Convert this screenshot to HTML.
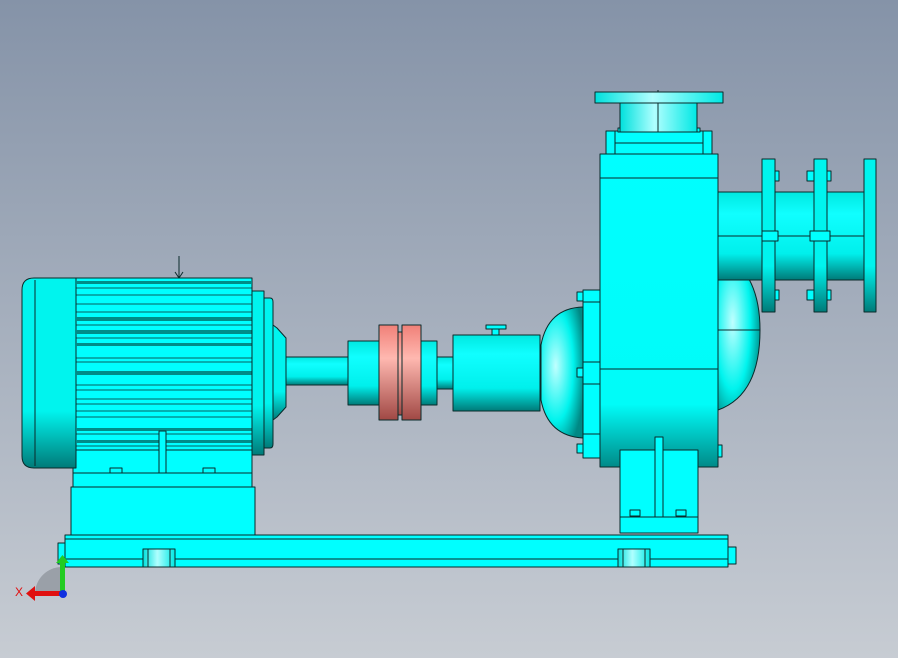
<!DOCTYPE html><html><head><style>html,body{margin:0;padding:0}body{width:898px;height:658px;overflow:hidden}</style></head><body>
<svg width="898" height="658" viewBox="0 0 898 658" xmlns="http://www.w3.org/2000/svg" style="display:block">
<defs>
<linearGradient id="bg" x1="0" y1="0" x2="0" y2="1"><stop offset="0" stop-color="#8593a8"/><stop offset="1" stop-color="#c7ccd3"/></linearGradient>
<linearGradient id="cyl" x1="0" y1="0" x2="0" y2="1"><stop offset="0" stop-color="#00e8e0"/><stop offset="0.25" stop-color="#10ffff"/><stop offset="0.7" stop-color="#00f0ec"/><stop offset="1" stop-color="#007a78"/></linearGradient>
<linearGradient id="cylh" x1="0" y1="0" x2="1" y2="0"><stop offset="0" stop-color="#00e0dc"/><stop offset="0.45" stop-color="#b0ffff"/><stop offset="1" stop-color="#00e8e4"/></linearGradient>
<linearGradient id="red" x1="0" y1="0" x2="0" y2="1"><stop offset="0" stop-color="#f08078"/><stop offset="0.35" stop-color="#ffb8b0"/><stop offset="1" stop-color="#a04844"/></linearGradient>
<linearGradient id="cap" x1="0" y1="0" x2="0" y2="1"><stop offset="0" stop-color="#00f4ee"/><stop offset="0.7" stop-color="#00f4ee"/><stop offset="1" stop-color="#007a78"/></linearGradient>
<linearGradient id="body" x1="0" y1="0" x2="0" y2="1"><stop offset="0" stop-color="#00ffff"/><stop offset="0.8" stop-color="#00fcf8"/><stop offset="1" stop-color="#008a88"/></linearGradient>
<radialGradient id="dome" cx="0.35" cy="0.45" r="0.7"><stop offset="0" stop-color="#c0ffff"/><stop offset="0.6" stop-color="#00f4ee"/><stop offset="1" stop-color="#008884"/></radialGradient>
</defs>
<rect width="898" height="658" fill="url(#bg)"/>
<g stroke-width="1" stroke-linejoin="round" style="stroke:#0a2a2a">
<rect x="65" y="535" width="663" height="32" fill="#00ffff"/>
<line x1="65" y1="539" x2="728" y2="539"/><line x1="65" y1="559" x2="728" y2="559"/>
<rect x="728" y="547" width="8" height="17" fill="#00ffff"/>
<rect x="58" y="543" width="7" height="21" fill="#00ffff"/>
<rect x="143" y="549" width="32" height="18" fill="url(#cylh)"/><line x1="148" y1="549" x2="148" y2="567"/><line x1="170" y1="549" x2="170" y2="567"/>
<rect x="618" y="549" width="32" height="18" fill="url(#cylh)"/><line x1="623" y1="549" x2="623" y2="567"/><line x1="645" y1="549" x2="645" y2="567"/>
<rect x="71" y="487" width="184" height="48" fill="#00ffff"/>
<rect x="73" y="450" width="179" height="37" fill="#00ffff"/>
<line x1="73" y1="473" x2="252" y2="473"/>
<rect x="110" y="468" width="12" height="5" fill="#00ffff"/><rect x="203" y="468" width="12" height="5" fill="#00ffff"/>
<path d="M34 278 H76 V468 H34 Q22 468 22 456 V290 Q22 278 34 278Z" fill="url(#cap)"/>
<line x1="35" y1="280" x2="35" y2="466"/>
<rect x="76" y="278" width="176" height="172" fill="#00ffff"/>
<g fill="#008c88" stroke="none">
<rect x="76" y="281" width="176" height="3"/><rect x="76" y="317" width="176" height="4"/><rect x="76" y="330" width="176" height="4"/><rect x="76" y="343" width="176" height="3"/><rect x="76" y="371" width="176" height="4"/><rect x="76" y="428" width="176" height="3"/><rect x="76" y="440" width="176" height="3"/>
</g>
<g stroke-width="0.8">
<line x1="76" y1="288" x2="252" y2="288"/><line x1="76" y1="295" x2="252" y2="295"/><line x1="76" y1="304" x2="252" y2="304"/><line x1="76" y1="312" x2="252" y2="312"/><line x1="76" y1="325" x2="252" y2="325"/><line x1="76" y1="338" x2="252" y2="338"/><line x1="76" y1="358" x2="252" y2="358"/><line x1="76" y1="362" x2="252" y2="362"/><line x1="76" y1="385" x2="252" y2="385"/><line x1="76" y1="390" x2="252" y2="390"/><line x1="76" y1="399" x2="252" y2="399"/><line x1="76" y1="404" x2="252" y2="404"/><line x1="76" y1="411" x2="252" y2="411"/><line x1="76" y1="417" x2="252" y2="417"/><line x1="76" y1="434" x2="252" y2="434"/><line x1="76" y1="446" x2="252" y2="446"/>
</g>
<rect x="159" y="431" width="7" height="42" fill="#00ffff"/>
<line x1="179" y1="256" x2="179" y2="278"/><path d="M175 272 L179 278 L183 272" fill="none"/>
<rect x="252" y="291" width="12" height="164" fill="url(#cap)"/>
<path d="M264 298 H270 Q273 298 273 302 V444 Q273 448 270 448 H264Z" fill="url(#cap)"/>
<path d="M273 325 L277 328 L286 338 V407 L277 417 L273 420Z" fill="url(#cap)"/>
<rect x="286" y="357" width="62" height="28" fill="url(#cyl)"/>
<rect x="348" y="341" width="89" height="64" fill="url(#cyl)"/>
<rect x="379" y="325" width="19" height="95" fill="url(#red)"/>
<rect x="398" y="332" width="4" height="83" fill="url(#red)"/>
<rect x="402" y="325" width="19" height="95" fill="url(#red)"/>
<rect x="437" y="357" width="16" height="32" fill="url(#cyl)"/>
<rect x="453" y="335" width="87" height="76" fill="url(#cyl)"/>
<rect x="486" y="325" width="20" height="4" fill="#00ffff"/><rect x="492" y="329" width="7" height="6" fill="#00ffff"/>
<path d="M583 307 Q548 308 541 345 V400 Q548 436 583 438Z" fill="url(#dome)"/>
<rect x="583" y="290" width="17" height="168" fill="#00ffff"/>
<line x1="583" y1="302" x2="600" y2="302"/><line x1="583" y1="362" x2="600" y2="362"/><line x1="583" y1="384" x2="600" y2="384"/><line x1="583" y1="434" x2="600" y2="434"/>
<rect x="577" y="292" width="6" height="9" fill="#00ffff"/><rect x="577" y="368" width="6" height="9" fill="#00ffff"/><rect x="577" y="444" width="6" height="9" fill="#00ffff"/>
<path d="M718 250 Q760 270 760 330 Q760 395 718 410Z" fill="url(#dome)"/>
<line x1="718" y1="280" x2="760" y2="280"/><line x1="718" y1="330" x2="760" y2="330"/>
<rect x="718" y="192" width="150" height="88" fill="url(#cyl)"/>
<line x1="718" y1="236" x2="866" y2="236"/>
<rect x="762" y="159" width="13" height="153" fill="url(#cap)"/>
<rect x="814" y="159" width="13" height="153" fill="url(#cap)"/>
<rect x="864" y="159" width="12" height="153" fill="url(#cap)"/>
<rect x="762" y="231" width="16" height="10" fill="#00ffff"/><rect x="810" y="231" width="20" height="10" fill="#00ffff"/>
<rect x="775" y="171" width="4" height="10" fill="#00ffff"/><rect x="775" y="290" width="4" height="10" fill="#00ffff"/>
<rect x="807" y="171" width="7" height="10" fill="#00ffff"/><rect x="827" y="171" width="4" height="10" fill="#00ffff"/>
<rect x="807" y="290" width="7" height="10" fill="#00ffff"/><rect x="827" y="290" width="4" height="10" fill="#00ffff"/>
<rect x="600" y="154" width="118" height="313" fill="url(#body)"/>
<line x1="600" y1="178" x2="718" y2="178"/><line x1="600" y1="369" x2="718" y2="369"/>
<rect x="718" y="445" width="4" height="12" fill="#00ffff"/>
<rect x="606" y="131" width="106" height="23" fill="#00ffff"/>
<line x1="615" y1="131" x2="615" y2="154"/><line x1="703" y1="131" x2="703" y2="154"/><line x1="615" y1="143" x2="703" y2="143"/>
<rect x="618" y="128" width="8" height="4" fill="#00ffff"/><rect x="692" y="128" width="8" height="4" fill="#00ffff"/>
<rect x="620" y="102" width="77" height="30" fill="url(#cylh)"/>
<line x1="658" y1="90" x2="658" y2="132"/>
<rect x="595" y="92" width="128" height="11" fill="url(#cylh)"/>
<rect x="620" y="450" width="78" height="83" fill="#00ffff"/>
<rect x="655" y="437" width="8" height="80" fill="#00ffff"/>
<line x1="620" y1="517" x2="698" y2="517"/>
<rect x="630" y="510" width="10" height="6" fill="#00ffff"/><rect x="676" y="510" width="10" height="6" fill="#00ffff"/>
</g>
<path d="M62 567 A27 27 0 0 0 35 594 H62Z" fill="#9aa0a8"/>
<rect x="60" y="560" width="5" height="34" fill="#22cc22"/>
<path d="M56 563 L62.5 555 L69 563Z" fill="#22cc22"/>
<rect x="34" y="591" width="28" height="5" fill="#e01010"/>
<path d="M35 586 L26 593.5 L35 601Z" fill="#e01010"/>
<circle cx="63" cy="594" r="4" fill="#1030e0"/>
<text x="15" y="596" font-family="Liberation Sans, sans-serif" font-size="12" fill="#e01010">X</text>
</svg>
</body></html>
